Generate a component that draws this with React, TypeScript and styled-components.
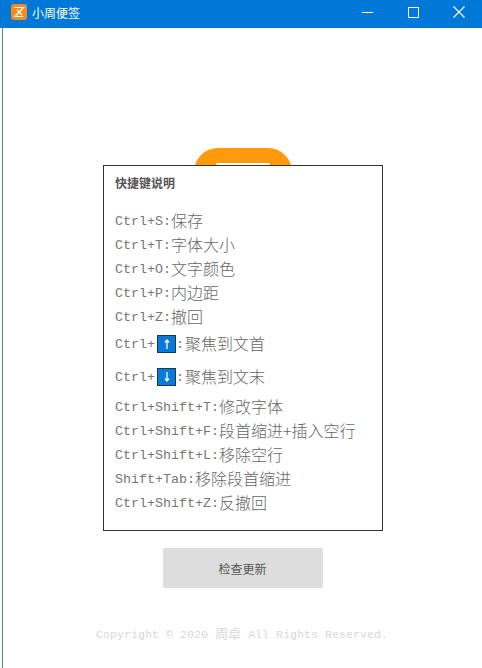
import React from "react";
import styled, { createGlobalStyle } from "styled-components";

const Global = createGlobalStyle`
  html, body { margin: 0; padding: 0; background: #fff; overflow: hidden; }
  #root { width: 482px; height: 668px; }
`;

const Win = styled.div`
  width: 482px;
  height: 668px;
  display: flex;
  flex-direction: column;
  position: relative;
  background: #fff;
  font-family: "Liberation Mono", "Noto Sans CJK SC", monospace;
`;

const TitleBar = styled.header`
  height: 28px;
  box-sizing: border-box;
  flex: none;
  background: #0078d7;
  display: flex;
  align-items: center;
  padding: 0 0 4px 11px;
  color: #fff;
`;

const AppIcon = styled.div`
  width: 16px;
  height: 16px;
  border-radius: 3px;
  background: #f58a1f;
  display: flex;
  align-items: center;
  justify-content: center;
  flex: none;
`;

const AppName = styled.span`
  margin-left: 5px;
  font: 12px "Noto Sans CJK SC", sans-serif;
  flex: 1;
`;

const WinBtn = styled.div`
  width: 46px;
  height: 24px;
  display: flex;
  align-items: center;
  justify-content: center;
`;

const Body = styled.main`
  flex: 1;
  display: flex;
  flex-direction: column;
  align-items: center;
  padding: 120px 0 0 3px;
  border-left: 1px solid #3f86bb;
  margin-left: 2px;
  position: relative;
`;

const Logo = styled.div`
  width: 98px;
  height: 48px;
  margin-left: -3px;
  background: #ff9a0c;
  border-radius: 24px 24px 0 0;
  display: flex;
  justify-content: center;
  align-items: flex-end;
`;

const LogoInner = styled.div`
  width: 54px;
  height: 33px;
  background: #fff;
  border-radius: 2px;
`;

const Dialog = styled.section`
  position: absolute;
  left: 100px;
  top: 137px;
  box-sizing: border-box;
  width: 280px;
  height: 366px;
  background: #fff;
  border: 1px solid #333;
  padding: 0 11px;
  color: #777;
`;

const DialogTitle = styled.h2`
  margin: 9px 0 18px;
  font: bold 12px/16px "Noto Sans CJK SC", sans-serif;
  color: #555;
  height: 16px;
`;

const Line = styled.div<{ $h?: number }>`
  height: ${(p) => p.$h ?? 24}px;
  display: flex;
  align-items: center;
  white-space: pre;
  font-size: 13.33px;
`;

const Cn = styled.span<{ $gap?: number }>`
  font: 300 16px/20px "Noto Sans CJK SC", sans-serif;
  color: #666;
  margin-top: -3px;
  margin-left: ${(p) => p.$gap ?? 0}px;
`;

const Cap = styled.span`
  width: 19px;
  height: 18px;
  box-sizing: border-box;
  border: 1.5px solid #14395a;
  background: #0a7ad9;
  display: inline-flex;
  align-items: center;
  justify-content: center;
  margin: 0 0 0 2px;
`;

const CheckBtn = styled.button`
  width: 160px;
  height: 40px;
  margin-top: 352px;
  margin-left: -3px;
  border: 0;
  border-radius: 2px;
  background: #ddd;
  color: #555;
  font: 12px "Noto Sans CJK SC", sans-serif;
  padding: 0;
`;

const Copyright = styled.footer`
  margin-top: 35px;
  margin-left: -4px;
  font-size: 11.67px;
  line-height: 20px;
  color: #d8d8d8;
  white-space: pre;
`;

const CopyCn = styled.span`
  font: 13px/20px "Noto Sans CJK SC", sans-serif;
`;

const Arrow = ({ up }: { up?: boolean }) => (
  <Cap>
    <svg width="8" height="10" viewBox="0 0 8 10" fill="none" stroke="#fff" strokeWidth="1.3">
      {up ? <path d="M4 10V1.5M2 3.5 4 1l2 2.5" /> : <path d="M4 0v8.5M2 6.5 4 9l2-2.5" />}
    </svg>
  </Cap>
);

const items: [string, string][] = [
  ["Ctrl+S:", "保存"],
  ["Ctrl+T:", "字体大小"],
  ["Ctrl+O:", "文字颜色"],
  ["Ctrl+P:", "内边距"],
  ["Ctrl+Z:", "撤回"],
];
const items2: [string, string][] = [
  ["Ctrl+Shift+T:", "修改字体"],
  ["Ctrl+Shift+F:", "段首缩进+插入空行"],
  ["Ctrl+Shift+L:", "移除空行"],
  ["Shift+Tab:", "移除段首缩进"],
  ["Ctrl+Shift+Z:", "反撤回"],
];

export default function App() {
  return (
    <Win>
      <Global />
      <TitleBar>
        <AppIcon>
          <svg width="12" height="12" viewBox="0 0 12 12" fill="none" stroke="#fff" strokeWidth="1.2">
            <path d="M1.5 1.5h9L2 10.5h8.5M4 4l5 5" />
          </svg>
        </AppIcon>
        <AppName>小周便签</AppName>
        <WinBtn>
          <svg width="11" height="11" viewBox="0 0 11 11" stroke="#fff" fill="none">
            <path d="M0 5.5h11" />
          </svg>
        </WinBtn>
        <WinBtn>
          <svg width="11" height="11" viewBox="0 0 11 11" stroke="#fff" fill="none">
            <rect x=".5" y=".5" width="10" height="10" />
          </svg>
        </WinBtn>
        <WinBtn>
          <svg width="12" height="12" viewBox="0 0 12 12" stroke="#fff" fill="none" strokeWidth="1.1">
            <path d="M.5.5l11 11M11.5.5l-11 11" />
          </svg>
        </WinBtn>
      </TitleBar>
      <Body>
        <Logo>
          <LogoInner />
        </Logo>
        <Dialog>
          <DialogTitle>快捷键说明</DialogTitle>
          {items.map(([k, v]) => (
            <Line key={k}>
              {k}
              <Cn>{v}</Cn>
            </Line>
          ))}
          <Line $h={30}>
            Ctrl+
            <Arrow up />:<Cn $gap={1}>聚焦到文首</Cn>
          </Line>
          <Line $h={36}>
            Ctrl+
            <Arrow />:<Cn $gap={1}>聚焦到文末</Cn>
          </Line>
          {items2.map(([k, v]) => (
            <Line key={k}>
              {k}
              <Cn>{v}</Cn>
            </Line>
          ))}
        </Dialog>
        <CheckBtn>检查更新</CheckBtn>
        <Copyright>
          Copyright © 2020 <CopyCn>周卓</CopyCn> All Rights Reserved.
        </Copyright>
      </Body>
    </Win>
  );
}
